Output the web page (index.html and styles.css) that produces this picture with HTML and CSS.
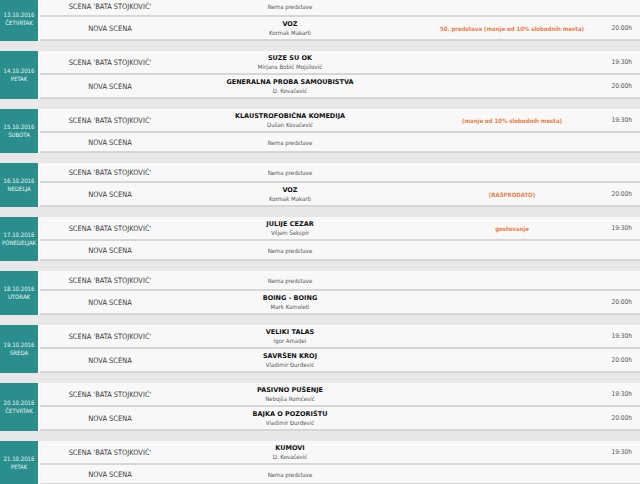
FILE: index.html
```html
<!DOCTYPE html>
<html lang="sr">
<head>
<meta charset="utf-8">
<title>Repertoar</title>
<link rel="stylesheet" href="styles.css">
</head>
<body>
<div class="schedule">

  <section class="day">
    <div class="date">13.10.2016<br>ČETVRTAK</div>
    <div class="rows">
      <div class="row empty"><div class="scene">SCENA 'BATA STOJKOVIĆ'</div><div class="play"><span class="none">Nema predstave</span></div><div class="note"></div><div class="time"></div></div>
      <div class="row"><div class="scene">NOVA SCENA</div><div class="play"><b class="title">VOZ</b><span class="author">Kormak Makarti</span></div><div class="note">50. predstava (manje od 10% slobodnih mesta)</div><div class="time">20:00h</div></div>
    </div>
  </section>

  <section class="day">
    <div class="date">14.10.2016<br>PETAK</div>
    <div class="rows">
      <div class="row"><div class="scene">SCENA 'BATA STOJKOVIĆ'</div><div class="play"><b class="title">SUZE SU OK</b><span class="author">Mirjana Bobić Mojsilović</span></div><div class="note"></div><div class="time">19:30h</div></div>
      <div class="row"><div class="scene">NOVA SCENA</div><div class="play"><b class="title">GENERALNA PROBA SAMOUBISTVA</b><span class="author">D. Kovačević</span></div><div class="note"></div><div class="time">20:00h</div></div>
    </div>
  </section>

  <section class="day">
    <div class="date">15.10.2016<br>SUBOTA</div>
    <div class="rows">
      <div class="row"><div class="scene">SCENA 'BATA STOJKOVIĆ'</div><div class="play"><b class="title">KLAUSTROFOBIČNA KOMEDIJA</b><span class="author">Dušan Kovačević</span></div><div class="note">(manje od 10% slobodnih mesta)</div><div class="time">19:30h</div></div>
      <div class="row empty"><div class="scene">NOVA SCENA</div><div class="play"><span class="none">Nema predstave</span></div><div class="note"></div><div class="time"></div></div>
    </div>
  </section>

  <section class="day">
    <div class="date">16.10.2016<br>NEDELJA</div>
    <div class="rows">
      <div class="row empty"><div class="scene">SCENA 'BATA STOJKOVIĆ'</div><div class="play"><span class="none">Nema predstave</span></div><div class="note"></div><div class="time"></div></div>
      <div class="row"><div class="scene">NOVA SCENA</div><div class="play"><b class="title">VOZ</b><span class="author">Kormak Makarti</span></div><div class="note">(RASPRODATO)</div><div class="time">20:00h</div></div>
    </div>
  </section>

  <section class="day">
    <div class="date">17.10.2016<br>PONEDELJAK</div>
    <div class="rows">
      <div class="row"><div class="scene">SCENA 'BATA STOJKOVIĆ'</div><div class="play"><b class="title">JULIJE CEZAR</b><span class="author">Viljem Šekspir</span></div><div class="note">gostovanje</div><div class="time">19:30h</div></div>
      <div class="row empty"><div class="scene">NOVA SCENA</div><div class="play"><span class="none">Nema predstave</span></div><div class="note"></div><div class="time"></div></div>
    </div>
  </section>

  <section class="day">
    <div class="date">18.10.2016<br>UTORAK</div>
    <div class="rows">
      <div class="row empty"><div class="scene">SCENA 'BATA STOJKOVIĆ'</div><div class="play"><span class="none">Nema predstave</span></div><div class="note"></div><div class="time"></div></div>
      <div class="row"><div class="scene">NOVA SCENA</div><div class="play"><b class="title">BOING - BOING</b><span class="author">Mark Kamoleti</span></div><div class="note"></div><div class="time">20:00h</div></div>
    </div>
  </section>

  <section class="day">
    <div class="date">19.10.2016<br>SREDA</div>
    <div class="rows">
      <div class="row"><div class="scene">SCENA 'BATA STOJKOVIĆ'</div><div class="play"><b class="title">VELIKI TALAS</b><span class="author">Igor Amadei</span></div><div class="note"></div><div class="time">19:30h</div></div>
      <div class="row"><div class="scene">NOVA SCENA</div><div class="play"><b class="title">SAVRŠEN KROJ</b><span class="author">Vladimir Đurđević</span></div><div class="note"></div><div class="time">20:00h</div></div>
    </div>
  </section>

  <section class="day">
    <div class="date">20.10.2016<br>ČETVRTAK</div>
    <div class="rows">
      <div class="row"><div class="scene">SCENA 'BATA STOJKOVIĆ'</div><div class="play"><b class="title">PASIVNO PUŠENJE</b><span class="author">Nebojša Romčević</span></div><div class="note"></div><div class="time">19:30h</div></div>
      <div class="row"><div class="scene">NOVA SCENA</div><div class="play"><b class="title">BAJKA O POZORIŠTU</b><span class="author">Vladimir Đurđević</span></div><div class="note"></div><div class="time">20:00h</div></div>
    </div>
  </section>

  <section class="day">
    <div class="date">21.10.2016<br>PETAK</div>
    <div class="rows">
      <div class="row"><div class="scene">SCENA 'BATA STOJKOVIĆ'</div><div class="play"><b class="title">KUMOVI</b><span class="author">D. Kovačević</span></div><div class="note"></div><div class="time">19:30h</div></div>
      <div class="row empty"><div class="scene">NOVA SCENA</div><div class="play"><span class="none">Nema predstave</span></div><div class="note"></div><div class="time"></div></div>
    </div>
  </section>

</div>
</body>
</html>
```

FILE: styles.css
```css
html, body {
  margin: 0;
  padding: 0;
  background: #e8e8e8;
}

body {
  font-family: "DejaVu Sans Condensed", "DejaVu Sans", sans-serif;
  font-stretch: condensed;
  font-size: 7.4px;
  color: #333;
}

.schedule {
  display: flex;
  flex-direction: column;
  gap: 10px;
  margin-top: -3px;
}

.day {
  display: flex;
  gap: 2px;
  background: #fff;
}

.date {
  width: 38px;
  flex: none;
  background: #2a8f8c;
  color: #e8f4f3;
  font-size: 6px;
  line-height: 8px;
  display: flex;
  align-items: center;
  justify-content: center;
  text-align: center;
}

.rows {
  flex: 1;
  display: flex;
  flex-direction: column;
}

.row {
  display: grid;
  grid-template-columns: 140px 220px 200px 1fr;
  align-items: center;
  height: 24px;
  box-sizing: border-box;
  background: #f8f8f8;
  border-bottom: 2px solid #d6d6d6;
}

.row.empty {
  height: 20px;
}

.scene {
  text-align: center;
  color: #3a3a3a;
}

.play {
  display: flex;
  flex-direction: column;
  align-items: center;
  text-align: center;
}

.title {
  font-family: "DejaVu Sans", sans-serif;
  font-stretch: normal;
  font-weight: bold;
  text-transform: uppercase;
  font-size: 6.5px;
  line-height: 10px;
  color: #111;
}

.author {
  font-size: 6px;
  line-height: 8px;
  color: #555;
}

.none {
  color: #555;
  font-size: 6px;
}

.note {
  padding-left: 24px;
  text-align: center;
  color: #e8804a;
  font-weight: bold;
  font-size: 6px;
}

.time {
  text-align: right;
  padding-right: 8px;
  color: #555;
  font-size: 6.5px;
}
```
